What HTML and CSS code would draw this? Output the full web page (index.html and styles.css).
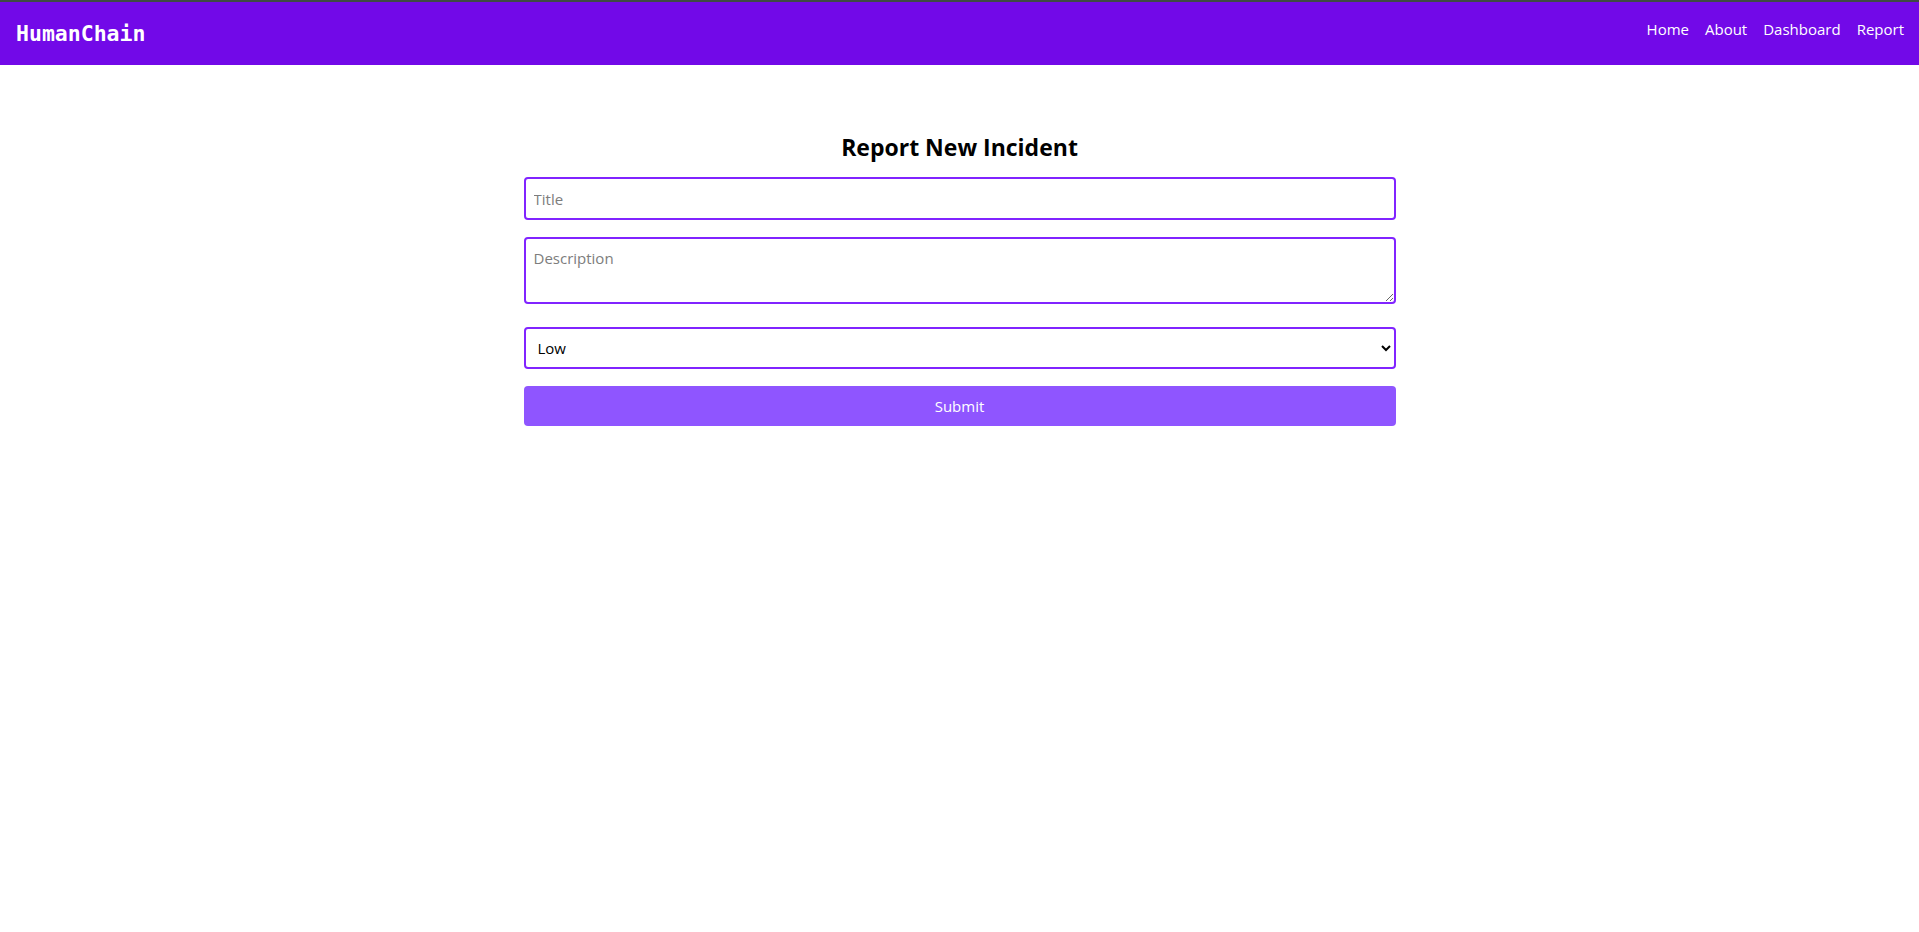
FILE: index.html
```html
<!DOCTYPE html>
<html lang="en">
<head>
<meta charset="utf-8">
<title>HumanChain</title>
<link rel="stylesheet" href="styles.css">
</head>
<body>
<header class="navbar">
  <div class="logo">HumanChain</div>
  <nav class="nav-links">
    <a href="#">Home</a>
    <a href="#">About</a>
    <a href="#">Dashboard</a>
    <a href="#">Report</a>
  </nav>
</header>
<main class="page">
  <h2 class="page-title">Report New Incident</h2>
  <form class="incident-form">
    <input class="field field-title" type="text" placeholder="Title">
    <textarea class="field field-desc" placeholder="Description"></textarea>
    <select class="field field-select">
      <option>Low</option>
      <option>Medium</option>
      <option>High</option>
    </select>
    <button class="submit-btn" type="button">Submit</button>
  </form>
</main>
</body>
</html>
```

FILE: styles.css
```css
* { box-sizing: border-box; }

body {
  margin: 0;
  font-family: "Open Sans", "Noto Sans", sans-serif;
  background: #ffffff;
  color: #000;
}

.navbar {
  height: 65px;
  border-top: 2px solid #3f4a44;
  background: #7209e8;
  display: flex;
  align-items: flex-start;
  justify-content: space-between;
  padding: 17px 15px 0 16px;
}

.logo {
  font-family: "DejaVu Sans Mono", "Liberation Mono", monospace;
  font-weight: bold;
  font-size: 21.5px;
  line-height: 25px;
  color: #ffffff;
  margin-top: 2px;
}

.nav-links {
  display: flex;
  gap: 16px;
}

.nav-links a {
  color: #ffffff;
  text-decoration: none;
  font-size: 15px;
  line-height: 20px;
}

.page {
  padding-top: 66px;
}

.page-title {
  margin: 0 0 14px;
  text-align: center;
  font-size: 23px;
  line-height: 32px;
  font-weight: 700;
}

.incident-form {
  width: 872px;
  margin: 0 auto;
  display: flex;
  flex-direction: column;
}

.field {
  width: 100%;
  border: 2px solid #8124ff;
  border-radius: 4px;
  font-family: "Open Sans", "Noto Sans", sans-serif;
  font-size: 15px;
  color: #000;
  background: #fff;
  outline: none;
}

.field::placeholder {
  color: #7d7d7d;
}

.field-title {
  height: 43px;
  padding: 0 8px;
  margin-bottom: 17px;
}

.field-desc {
  height: 67px;
  padding: 9px 8px;
  resize: vertical;
  margin-bottom: 23px;
}

.field-select {
  height: 42px;
  padding: 0 8px;
  margin-bottom: 17px;
}

.submit-btn {
  height: 40px;
  border: none;
  border-radius: 4px;
  background: #8f55ff;
  color: #fff;
  font-family: "Open Sans", "Noto Sans", sans-serif;
  font-size: 15px;
  cursor: pointer;
}
```
